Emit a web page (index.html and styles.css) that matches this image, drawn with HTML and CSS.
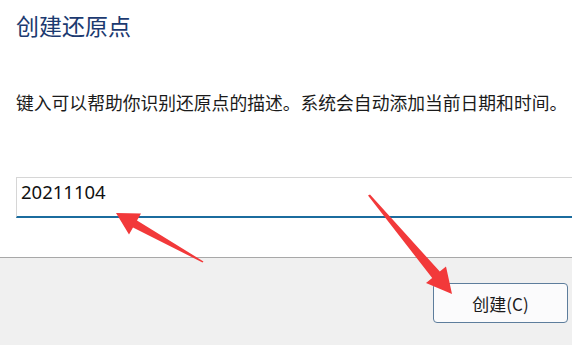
FILE: index.html
```html
<!DOCTYPE html>
<html lang="zh">
<head>
<meta charset="utf-8">
<link rel="stylesheet" href="styles.css">
</head>
<body>
<div class="dialog">
  <div class="main">
    <h1 class="title">创建还原点</h1>
    <p class="desc">键入可以帮助你识别还原点的描述。系统会自动添加当前日期和时间。</p>
    <div class="field">20211104</div>
  </div>
  <div class="footer">
    <button class="btn">创建(C)</button>
  </div>
  <svg class="arrows" width="572" height="345" viewBox="0 0 572 345">
    <polygon fill="#f2393a" points="116,213 141,213.5 137,220.5 203.5,261.5 202.5,262.5 133,227.5 129,234.5"/>
    <polygon fill="#f2393a" points="452,294 426,283 432.2,278 368,195.5 370,194.5 439.8,271.6 446,266.4"/>
  </svg>
</div>
</body>
</html>
```
FILE: styles.css
```css
html, body {
  margin: 0;
  padding: 0;
  background: #ffffff;
}
.dialog {
  position: relative;
  width: 572px;
  height: 345px;
  overflow: hidden;
  font-family: "Noto Sans CJK SC", "Noto Sans", sans-serif;
}
.main {
  height: 257px;
  padding: 8px 0 0 16px;
  box-sizing: border-box;
}
.title {
  margin: 0;
  font-size: 23px;
  font-weight: normal;
  line-height: 34px;
  color: #1c3a70;
}
.desc {
  margin: 48px 0 0 0;
  font-size: 17.8px;
  line-height: 24px;
  color: #1a1a1a;
  white-space: nowrap;
}
.field {
  margin-top: 63px;
  height: 38px;
  border: 1px solid #d6d6d6;
  border-right: none;
  border-bottom: 2px solid #1b6c9e;
  padding: 0 0 0 4px;
  font-family: "Noto Sans", sans-serif;
  font-size: 18.5px;
  line-height: 28px;
  color: #111;
}
.footer {
  height: 88px;
  background: #f0f0f0;
  border-top: 1px solid #a8a8a8;
  display: flex;
  justify-content: flex-end;
  align-items: flex-start;
  padding: 25px 4px 0 0;
  box-sizing: border-box;
}
.btn {
  width: 135px;
  height: 40px;
  background: #fbfbfc;
  border: 1px solid #5d7d9c;
  border-radius: 4px;
  font-family: "Noto Sans CJK SC", "Noto Sans", sans-serif;
  font-size: 17px;
  color: #1a1a1a;
  padding: 0;
}
.arrows {
  position: absolute;
  left: 0;
  top: 0;
  pointer-events: none;
}
```
